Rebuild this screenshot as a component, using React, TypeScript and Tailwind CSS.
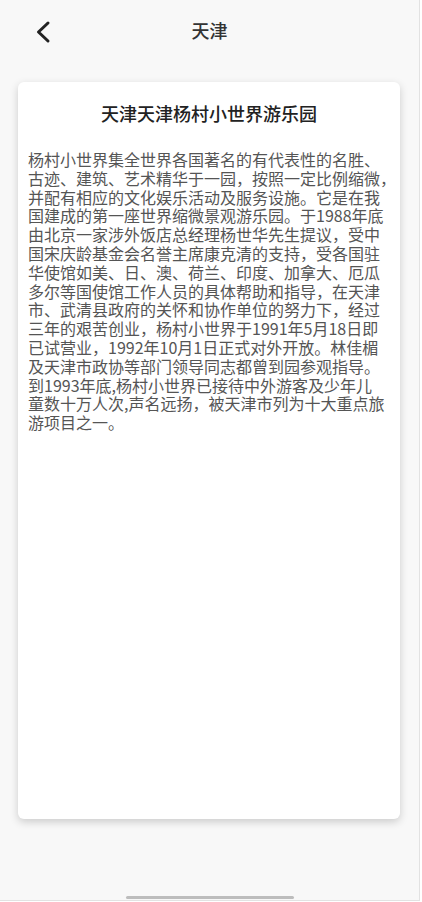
const lines = [
  "杨村小世界集全世界各国著名的有代表性的名胜、",
  "古迹、建筑、艺术精华于一园，按照一定比例缩微，",
  "并配有相应的文化娱乐活动及服务设施。它是在我",
  "国建成的第一座世界缩微景观游乐园。于1988年底",
  "由北京一家涉外饭店总经理杨世华先生提议，受中",
  "国宋庆龄基金会名誉主席康克清的支持，受各国驻",
  "华使馆如美、日、澳、荷兰、印度、加拿大、厄瓜",
  "多尔等国使馆工作人员的具体帮助和指导，在天津",
  "市、武清县政府的关怀和协作单位的努力下，经过",
  "三年的艰苦创业，杨村小世界于1991年5月18日即",
  "已试营业，1992年10月1日正式对外开放。林佳楣",
  "及天津市政协等部门领导同志都曾到园参观指导。",
  "到1993年底,杨村小世界已接待中外游客及少年儿",
  "童数十万人次,声名远扬，被天津市列为十大重点旅",
  "游项目之一。",
];

export default function App() {
  return (
    <div
      className="h-[902px] w-[422px] bg-white"
      style={{ fontFamily: '"Noto Sans CJK SC", "Noto Sans", sans-serif' }}
    >
      <div className="flex h-[901px] w-[420px] flex-col border-r border-b border-[#e2e2e2] bg-[#f8f8f8]">
        {/* header */}
        <div className="relative flex h-[60px] items-center justify-center">
          <button type="button" className="absolute left-[30px] top-[16px] p-1">
            <svg width="20" height="24" viewBox="0 0 20 24" fill="none">
              <polyline
                points="14,3 4.5,12 14,21"
                stroke="#222"
                strokeWidth="3"
                strokeLinecap="round"
                strokeLinejoin="round"
              />
            </svg>
          </button>
          <h1 className="text-[18px] font-medium leading-none text-[#333]">天津</h1>
        </div>

        {/* card */}
        <div className="mx-[18px] mt-[22px] h-[737px] w-[382px] rounded-[6px] bg-white px-[10px] shadow-[0_3px_8px_rgba(0,0,0,0.18)]">
          <h2 className="mt-[20px] text-center text-[18px] font-medium leading-[22px] text-[#222]">
            天津天津杨村小世界游乐园
          </h2>
          <div className="mt-[26px] text-[16px] leading-[18.8px] text-[#555]">
            {lines.map((l, i) => (
              <div key={i} className="whitespace-nowrap">
                {l}
              </div>
            ))}
          </div>
        </div>

        <div className="flex flex-1 items-end justify-center pb-[1px]">
          <div className="h-[3px] w-[168px] rounded-full bg-[#bdbdbd]" />
        </div>
      </div>
    </div>
  );
}
